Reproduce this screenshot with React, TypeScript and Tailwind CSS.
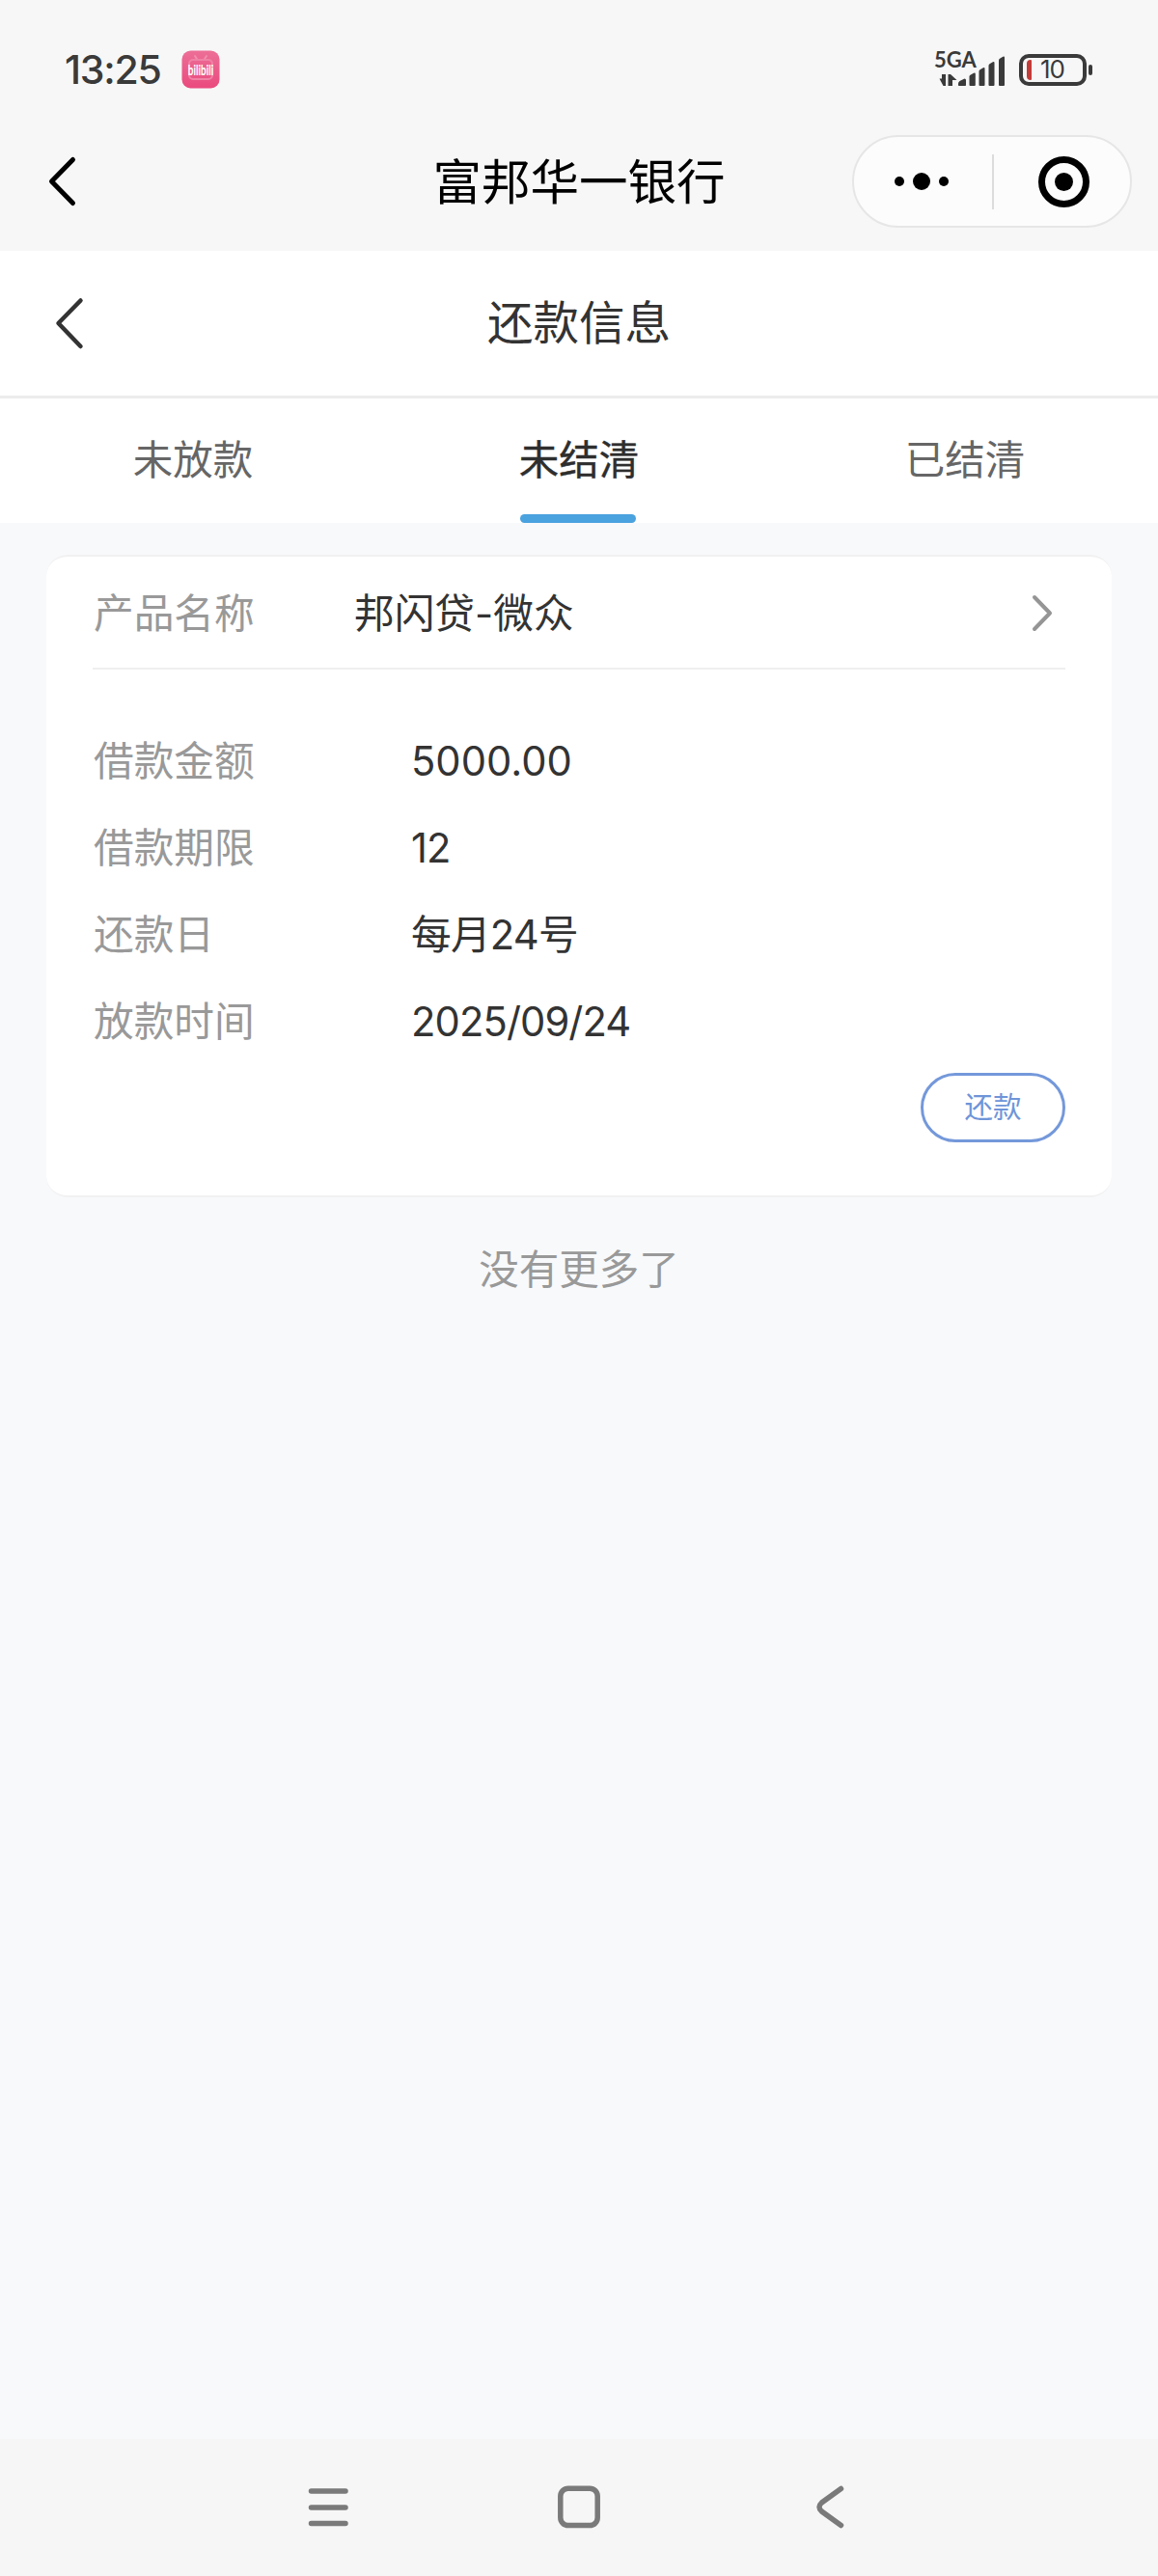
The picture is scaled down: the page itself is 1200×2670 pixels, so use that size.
const tabs = [
  { label: "未放款", active: false },
  { label: "未结清", active: true },
  { label: "已结清", active: false },
];

const details = [
  { label: "借款金额", value: "5000.00", spacing: "" },
  { label: "借款期限", value: "12", spacing: "tracking-[-1px]" },
  { label: "还款日", value: "每月24号", spacing: "tracking-[-0.8px]" },
  { label: "放款时间", value: "2025/09/24", spacing: "tracking-[-0.9px]" },
];

function BilibiliIcon() {
  return (
    <svg className="ml-[22px] h-10 w-10 overflow-visible" viewBox="0 0 40 40">
      <defs>
        <linearGradient id="bili" x1="0" y1="0" x2="0" y2="1">
          <stop offset="0" stopColor="#ec6f98" />
          <stop offset="1" stopColor="#ea4a7e" />
        </linearGradient>
      </defs>
      <rect x="0.5" y="0.5" width="39" height="39" rx="9" fill="url(#bili)" />
      <path d="M14 6l2 3M26 6l-2 3" stroke="#f08fae" strokeWidth="2" strokeLinecap="round" />
      <rect x="8" y="10" width="24" height="20" rx="4" fill="none" stroke="#ef82a5" strokeWidth="2" />
      <text transform="translate(20 26) scale(0.95 1.45)" textAnchor="middle" fontSize="10.5" fontWeight="700" fill="#fff" fontFamily="Lato, sans-serif">
        bilibili
      </text>
    </svg>
  );
}

function SignalIcon() {
  return (
    <svg className="-mt-3 h-[52px] w-[80px]" viewBox="-4 -12 80 52" fill="#3a3a3a">
      <text x="-1" y="18" fontSize="22" fontWeight="700" fontFamily="Lato, sans-serif">
        5GA
      </text>
      <path d="M4.500 29.500h2.500v-4.500h4v12h-2.500zM13.500 25h2.500l6.500 6h-4.500v6h-4.500z" />
      <path d="M24 36.200v-1.500q0-1.500 1.500-2.700l5-2.500q1.500 0 1.500 1.500v5.200q0 .8-.8.8h-6.400q-.8 0-.8-.8z" />
      <path d="M35.500 36v-8.500q0-1 1-1.700l3.500-2q1.800-.8 1.800 1v11.200q0 1-1 1h-4.300q-1 0-1-1z" />
      <path d="M45.500 36v-14q0-1 1-1.700l3.300-2q1.700-.8 1.700 1v16.700q0 1-1 1h-4q-1 0-1-1z" />
      <path d="M55.500 36v-20q0-1 1-1.700l3.300-2q1.700-.8 1.700 1v22.700q0 1-1 1h-4q-1 0-1-1z" />
      <path d="M66 36v-25.500q0-1 1-1.700l3.300-2q1.700-.8 1.700 1v28.200q0 1-1 1h-4q-1 0-1-1z" />
    </svg>
  );
}

function Battery() {
  return (
    <div className="ml-[11px] flex items-center">
      <div className="flex h-[33px] w-[70px] items-center rounded-[10px] border-4 border-[#3a3a3a] pl-1">
        <div className="h-[21px] w-[5px] rounded-l-[4px] rounded-r-[1px] bg-[#c43c38]" />
        <span className="ml-[9px] text-[26px] leading-none tracking-[-1px] text-[#3a3a3a]">10</span>
      </div>
      <div className="ml-[2px] h-[11px] w-[4px] rounded-[2px] bg-[#3a3a3a]" />
    </div>
  );
}

function StatusBar() {
  return (
    <div className="flex h-[120px] items-start justify-between pl-[67px] pr-[68px] pt-[52px] text-[#3a3a3a]">
      <div className="flex h-10 items-center">
        <span className="w-[99px] whitespace-nowrap text-[41px] font-medium leading-10 tracking-[-1.2px]">13:25</span>
        <BilibiliIcon />
      </div>
      <div className="flex h-10 items-center">
        <SignalIcon />
        <Battery />
      </div>
    </div>
  );
}

function NavBar() {
  return (
    <div className="grid h-[140px] grid-cols-[1fr_320px_1fr] items-start pt-5">
      <svg className="ml-[45px] h-24 w-10" viewBox="0 0 40 96" fill="none" stroke="#000" strokeWidth="5" strokeLinecap="round" strokeLinejoin="round">
        <path d="M30.500 25.500L8.500 48l22 22.500" />
      </svg>
      <h1 className="whitespace-nowrap text-center text-[50.5px] leading-[97px] text-black">富邦华一银行</h1>
      <div className="mr-[27px] flex h-24 w-[290px] items-center justify-self-end rounded-full border-2 border-[#e6e6e6] bg-[#fcfcfc]">
        <div className="flex w-[143px] items-center justify-center gap-[9px] pr-1">
          <i className="h-[10px] w-[10px] rounded-full bg-black" />
          <i className="h-[18px] w-[18px] rounded-full bg-black" />
          <i className="h-[10px] w-[10px] rounded-full bg-black" />
        </div>
        <div className="h-[57px] w-[2px] bg-[#dcdcdc]" />
        <div className="ml-[46px] flex h-[53px] w-[53px] items-center justify-center rounded-full border-[7px] border-black">
          <i className="h-[19px] w-[19px] rounded-full bg-black" />
        </div>
      </div>
    </div>
  );
}

function PageHeader() {
  return (
    <div className="grid h-[153px] grid-cols-[1fr_320px_1fr] items-center border-b-3 border-[#ececec] bg-white">
      <svg className="ml-[52px] h-[60px] w-10" viewBox="0 0 40 60" fill="none" stroke="#333" strokeWidth="4.500" strokeLinecap="round" strokeLinejoin="round">
        <path d="M31.500 6.500L8.500 30l23 24" />
      </svg>
      <h2 className="text-center text-[47.5px] leading-[60px] text-[#333]">还款信息</h2>
    </div>
  );
}

function Tabs() {
  return (
    <div className="grid h-[129px] grid-cols-3 bg-white">
      {tabs.map(({ label, active }) => (
        <div
          key={label}
          className={
            active
              ? "flex flex-col items-center justify-between text-[#2e2e2e] [-webkit-text-stroke:0.4px_#2e2e2e]"
              : "flex flex-col items-center justify-between text-[#666]"
          }
        >
          <span className="h-[120px] text-[41.5px] leading-[128px]">{label}</span>
          {active && <div className="mr-[3px] h-[9px] w-[120px] rounded-full bg-[#4aa2df]" />}
        </div>
      ))}
    </div>
  );
}

function LoanCard() {
  return (
    <div className="mx-12 mt-[33px] h-[666px] rounded-[22px] border-y-2 border-[#f1f1f2] bg-white px-12">
      <div className="flex h-[117px] items-center border-b-2 border-[#efefef] pl-px text-[41.7px]">
        <span className="w-[270px] pt-[3px] text-[#999]">产品名称</span>
        <span className="flex-1 pt-[3px] text-[#333]">邦闪贷-微众</span>
        <svg className="mr-[10px] h-10 w-7" viewBox="0 0 28 40" fill="none" stroke="#959595" strokeWidth="4" strokeLinecap="round" strokeLinejoin="round">
          <path d="M6 4l16 16.500L6 37" />
        </svg>
      </div>
      <div className="pl-px pt-[50px]">
        {details.map(({ label, value, spacing }) => (
          <div key={label} className="flex h-[90px] items-center text-[41.7px]">
            <span className="w-[329px] text-[#999]">{label}</span>
            <span className={"text-[#333] " + spacing}>{value}</span>
          </div>
        ))}
      </div>
      <div className="flex justify-end pt-2">
        <button type="button" className="h-[72px] w-[150px] rounded-full border-3 border-[#7498da] pb-[2px] text-[29.5px] leading-[64px] text-[#6f95d8]">
          还款
        </button>
      </div>
    </div>
  );
}

function SystemNav() {
  return (
    <div className="flex h-[142px] items-center justify-between bg-[#f6f6f6] px-[310px]">
      <svg className="h-[60px] w-[60px]" viewBox="0 0 60 60" stroke="#7a7a7a" strokeWidth="5.500" strokeLinecap="round">
        <path d="M12.500 13h35.500M12.500 30h35.500M12.500 46.500h35.500" />
      </svg>
      <svg className="h-[60px] w-[60px]" viewBox="0 0 60 60" fill="none" stroke="#7a7a7a" strokeWidth="5.500">
        <rect x="10.800" y="10.200" width="38.400" height="38.400" rx="8" />
      </svg>
      <svg className="h-[60px] w-[60px]" viewBox="0 0 60 60" fill="none" stroke="#7a7a7a" strokeWidth="5.500" strokeLinecap="round">
        <path d="M41.500 10.500L21.500 25q-5 4.500 0 9l20 14.500" />
      </svg>
    </div>
  );
}

export default function App() {
  return (
    <div className="flex h-[2670px] w-[1200px] flex-col bg-[#f8f9fb] font-[Inter,'Noto_Sans_CJK_SC',sans-serif]">
      <header className="bg-[#f7f7f7]">
        <StatusBar />
        <NavBar />
      </header>
      <PageHeader />
      <Tabs />
      <main className="flex-1">
        <LoanCard />
        <p className="mt-[45px] text-center text-[41.5px] leading-[60px] text-[#999]">没有更多了</p>
      </main>
      <SystemNav />
    </div>
  );
}
